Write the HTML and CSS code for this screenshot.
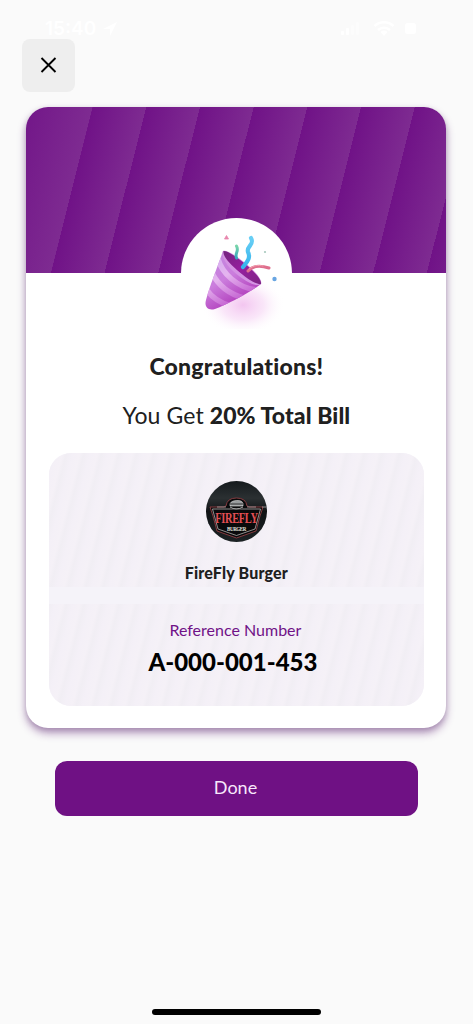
FILE: index.html
```html
<!DOCTYPE html>
<html lang="en">
<head>
<meta charset="utf-8">
<meta name="viewport" content="width=device-width, initial-scale=1">
<title>Congratulations</title>
<link rel="stylesheet" href="styles.css">
</head>
<body>
<div class="screen">
  <header class="status">
    <div class="status-left">
      <span class="time">15:40</span>
      <svg width="16" height="16" viewBox="0 0 16 16"><path d="M15 1 1 8h7v7z" fill="#fff"/></svg>
    </div>
    <svg class="status-right" width="80" height="18" viewBox="0 0 80 18" fill="#fff">
      <rect x="1" y="12" width="3" height="4" rx="1"/><rect x="6" y="9" width="3" height="7" rx="1"/>
      <rect x="11" y="6" width="3" height="10" rx="1" opacity=".35"/><rect x="16" y="3" width="3" height="13" rx="1" opacity=".35"/>
      <path d="M44 17l-3.500-4a5.500 5.500 0 0 1 7 0z"/>
      <path d="M34.500 7a14 14 0 0 1 19 0M38 11a9 9 0 0 1 12 0" fill="none" stroke="#fff" stroke-width="2.400"/>
      <rect x="65" y="4" width="11" height="11" rx="2.500"/>
    </svg>
  </header>

  <button class="close" aria-label="Close">
    <svg width="17" height="17" viewBox="0 0 17 17"><path d="M1.500 1l14 14M15.500 1l-14 14" stroke="#000" stroke-width="1.900" fill="none"/></svg>
  </button>

  <main class="card">
    <div class="hero">
      <div class="medallion">
        <svg width="111" height="111" viewBox="0 0 111 111">
          <defs>
            <radialGradient id="glow"><stop offset="0" stop-color="#efb2eb" stop-opacity=".75"/><stop offset=".5" stop-color="#f3c8f1" stop-opacity=".45"/><stop offset="1" stop-color="#fff" stop-opacity="0"/></radialGradient>
            <linearGradient id="cone" x1="30" y1="43" x2="56" y2="86" gradientUnits="userSpaceOnUse"><stop offset="0" stop-color="#c487df"/><stop offset=".45" stop-color="#cb7ddd"/><stop offset="1" stop-color="#b13dbb"/></linearGradient>
            <linearGradient id="band" x1="30" y1="45" x2="52" y2="85" gradientUnits="userSpaceOnUse"><stop offset="0" stop-color="#d7b0ef"/><stop offset=".4" stop-color="#e5b4ef"/><stop offset="1" stop-color="#c463d1"/></linearGradient>
            <linearGradient id="mouth" x1="0" y1="0" x2="1" y2="1"><stop offset="0" stop-color="#73247f"/><stop offset=".5" stop-color="#961e9e"/><stop offset="1" stop-color="#7d2684"/></linearGradient>
            <linearGradient id="aqua" x1="0" y1="0" x2="0" y2="1"><stop offset="0" stop-color="#69cff5"/><stop offset="1" stop-color="#35b4ed"/></linearGradient>
            <linearGradient id="mint" x1="0" y1="0" x2="0" y2="1"><stop offset="0" stop-color="#79d5aa"/><stop offset="1" stop-color="#36a9bd"/></linearGradient>
            <clipPath id="coneClip"><path d="M42 33C39 42 29 67 25 82c-2 7 2 11 9 9C47 86 66 76 80 66z"/></clipPath>
          </defs>
          <ellipse cx="62" cy="87" rx="42" ry="30" fill="url(#glow)"/>
          <path d="M42 33C39 42 29 67 25 82c-2 7 2 11 9 9C47 86 66 76 80 66z" fill="url(#cone)"/>
          <g clip-path="url(#coneClip)" fill="none" stroke="url(#band)" stroke-width="5.500">
            <path d="M37 41C41 55 56 70 76 72"/>
            <path d="M31 55C37 67 48 76 63 80"/>
            <path d="M25 71C31 80 39 85 50 88"/>
          </g>
          <path d="M42 33c-2 7 5 17 16 25 9 7 18 11 22 8 2-4-7-14-17-22-9-7-17-12-21-11z" fill="#d493e3"/>
          <path d="M42.500 33c-1 5 6 13 17 22 8 7 17 12 20.500 11 1-4-7-13-17-21-9-7-16-12-20.500-12z" fill="url(#mouth)"/>
          <g fill="none" stroke-linecap="round">
            <path d="M55.500 28c3 5-2 7 0 12" stroke="url(#mint)" stroke-width="3"/>
            <path d="M70 20c4 7-5 8-3 14 3 6-1 10-5 15" stroke="url(#aqua)" stroke-width="4.200"/>
            <path d="M67 53c5-6 12-6 21-3" stroke="#df6f8d" stroke-width="3"/>
            <path d="M68 51c5-4 9-4 14-3" stroke="#f4a0af" stroke-width="1"/>
          </g>
          <path d="M45.500 17.500l2 3.500h-4z" fill="#e887ad" stroke="#e887ad" stroke-width=".8"/>
          <circle cx="84" cy="34" r="1.100" fill="#a7c8bd"/><circle cx="93.500" cy="61" r="2.200" fill="#68a5e2"/>
        </svg>
      </div>
    </div>

    <div class="body">
      <h1 class="title">Congratulations!</h1>
      <p class="prize">You Get <b>20% Total Bill</b></p>

      <section class="ticket">
        <div class="ticket-top">
          <svg class="logo" width="61" height="61" viewBox="0 0 61 61">
            <defs><linearGradient id="night" x1="0" y1="0" x2="0" y2="1"><stop offset="0" stop-color="#151a1d"/><stop offset=".28" stop-color="#2b3032"/><stop offset=".5" stop-color="#111416"/><stop offset="1" stop-color="#1c2224"/></linearGradient></defs>
            <circle cx="30.500" cy="30.500" r="30.500" fill="url(#night)"/>
            <path d="M20 25q1-8 10.500-8t10.500 8l2 1h14l-3 9-4 15-19.500 7-19.500-7-4-15-3-9h14z" fill="#090a0b" stroke="#914044" stroke-width=".9"/>
            <path d="M6.500 28h48l-5.500 20-18.500 6.500L12 48z" fill="none" stroke="#c8c5c4" stroke-width=".7"/>
            <path d="M11 26h9M41 26h9M56 26h4" stroke="#bdb7b7" stroke-width=".7"/>
            <path d="M24 25q-1-5 6.500-5.500T37 25z" fill="#979b9c" stroke="#ddd" stroke-width=".6"/>
            <path d="M24 23h13M25 27q5.500 3 11 0" stroke="#333" stroke-width="1.200" fill="none"/>
            <path d="M24 26q6 4 13 0" stroke="#c9c9c9" stroke-width=".8" fill="none"/>
            <text x="30.500" y="42.500" text-anchor="middle" class="logo-name">FIREFLY</text>
            <text x="30.500" y="50" text-anchor="middle" class="logo-sub">BURGER</text>
          </svg>
          <div class="merchant">FireFly Burger</div>
        </div>
        <div class="ticket-bottom">
          <div class="ref-label">Reference Number</div>
          <div class="ref-code">A-000-001-453</div>
        </div>
      </section>
    </div>
  </main>

  <button class="done"><span>Done</span></button>
  <div class="home-bar"></div>
</div>
</body>
</html>
```

FILE: styles.css
```css
* { box-sizing: border-box; }
body { margin: 0; background: #fafafa; font-family: Lato, "Open Sans", sans-serif; font-variant-ligatures: none; color: #202020; }
button { border: 0; padding: 0; font: inherit; }
svg { display: block; }
.screen { width: 473px; height: 1024px; display: flex; flex-direction: column; overflow: hidden; }

.status { height: 39px; flex: none; display: flex; justify-content: space-between; padding: 19px 55px 0 45px; }
.status-left { display: flex; gap: 6px; }
.status-left svg { margin-top: 2px; }
.time { font: 600 19px/20px Inter, sans-serif; color: #fff; }
.status-right { margin-right: -2px; }

.close { width: 53px; height: 53px; flex: none; margin-left: 22px; border-radius: 8px; background: #eee; display: grid; place-items: center; }

.card { width: 420px; height: 621px; flex: none; margin: 15.400px 0 0 26.400px; border-radius: 22px; background: #fff; box-shadow: 0 5px 8px rgba(98, 38, 122, .48), 0 2px 5px rgba(60, 60, 70, .16); }
.hero {
  height: 166px; border-radius: 22px 22px 0 0; display: flex; justify-content: center; padding-top: 110.500px;
  background:
    linear-gradient(104.100deg, #701287 -14px, #7e2b91 64.500px, transparent 64.700px),
    repeating-linear-gradient(104.100deg, #701287 -39.700px, #7e2b91 12.400px);
}
.medallion { width: 111px; height: 111px; flex: none; border-radius: 50%; background: #fff; }

.body { padding: 0 22px; display: flex; flex-direction: column; align-items: center; }
.title { margin: 78px 0 0; font-size: 23px; line-height: 30px; font-weight: 900; letter-spacing: .22px; white-space: nowrap; }
.prize { margin: 19px 0 0; font-size: 23px; line-height: 30px; letter-spacing: .1px; white-space: nowrap; }
.prize b { font-weight: 900; }

.ticket { width: 375px; height: 253px; margin-top: 23px; border-radius: 22px; overflow: hidden; background: #f5f3f9; display: flex; flex-direction: column; gap: 17px; }
.ticket-top, .ticket-bottom { display: flex; flex-direction: column; align-items: center; background: repeating-linear-gradient(104deg, #f1eef4 0, #f4f0f7 6px, #f5f1f7 13px, #f1eef4 17px); }
.ticket-top { height: 134px; padding-top: 27.500px; }
.ticket-bottom { flex: 1; padding-top: 16px; }
.logo-name { font: 700 10.500px/1 "Liberation Serif", serif; letter-spacing: -.400px; transform: scale(1, 1.450); transform-origin: 30.500px 42.500px; fill: #e34f54; }
.logo-sub { font: 700 5px/1 "Liberation Serif", serif; letter-spacing: -.400px; transform: scale(1, 1.300); transform-origin: 30.500px 50px; fill: #e2e2df; }
.merchant { margin-top: 20px; font-size: 16px; line-height: 22px; font-weight: 900; letter-spacing: .18px; white-space: nowrap; }
.ref-label { margin-right: 2px; font-size: 16px; line-height: 20px; color: #701287; white-space: nowrap; }
.ref-code { margin: 6px 7px 0 0; font-size: 24px; line-height: 32px; font-weight: 900; color: #000; white-space: nowrap; }

.done { width: 363px; height: 55px; flex: none; margin: 32.600px 0 0 55px; padding: 0 2px 3px 0; border-radius: 12px; background: #6f1184; color: #f8e8fb; font-size: 18px; line-height: 24px; }
.home-bar { width: 169px; height: 6px; margin: auto 0 9px 152px; border-radius: 3px; background: #000; }
```
